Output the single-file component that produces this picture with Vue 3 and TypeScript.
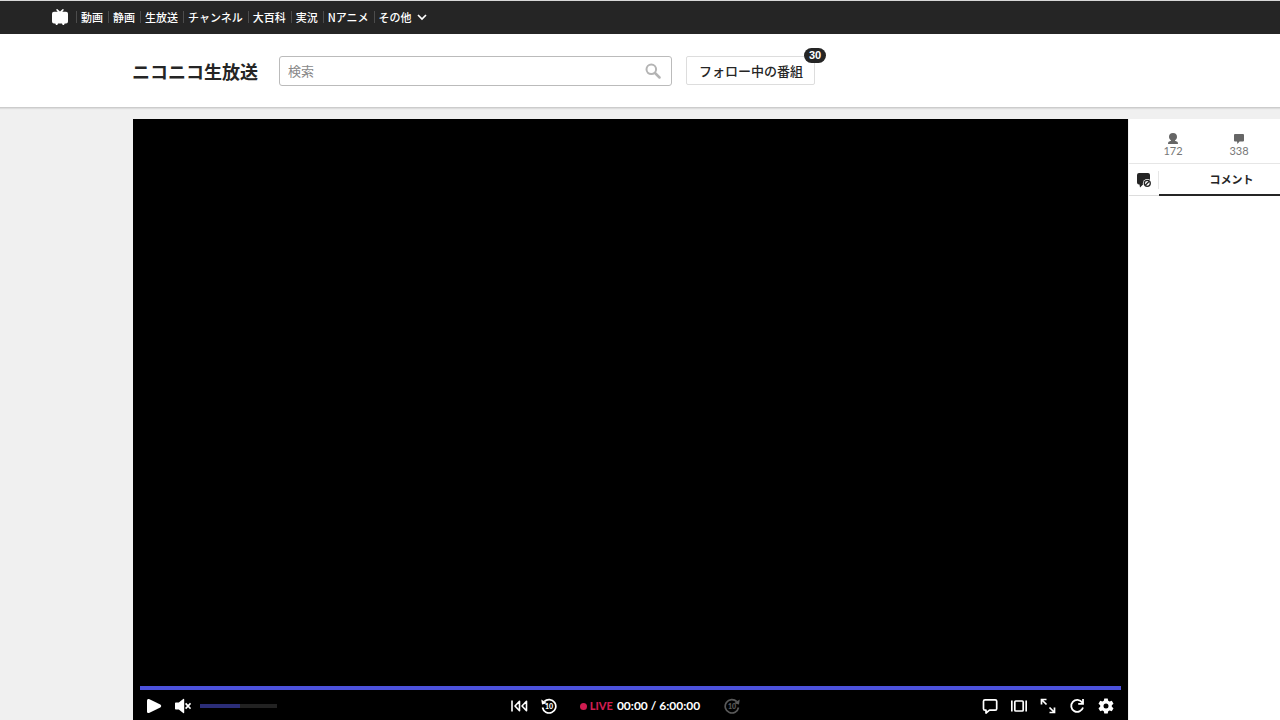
<script setup lang="ts">
import { ref } from 'vue'

const services: string[] = ['動画', '静画', '生放送', 'チャンネル', '大百科', '実況', 'Nアニメ']
const keyword = ref('')
const position = ref(100)
const volume = ref(52)
</script>

<template>
  <div class="page">
    <nav class="services" aria-label="サービス">
      <a class="home" href="#" aria-label="niconico">
        <svg width="16" height="16" viewBox="0 0 16 16" fill="#fff">
          <path d="M4 .7 5.2 0 8 2.4 10.8 0 12 .7 10.3 2.8H14q2 0 2 2v7.6q0 2-2 2h-1.3L12 16h-1.3l-.7-1.600H6L5.300 16H4l-.7-1.600H2q-2 0-2-2V4.800q0-2 2-2h3.700z" />
        </svg>
      </a>
      <a v-for="s in services" :key="s" class="service" href="#">{{ s }}</a>
      <button class="service more" type="button">
        その他
        <svg width="10" height="7" viewBox="0 0 10 7" fill="none" stroke="#fff" stroke-width="1.700"><path d="m1 1 4 4 4-4" /></svg>
      </button>
    </nav>

    <header class="header">
      <a class="logo" href="#">ニコニコ生放送</a>
      <form class="search" role="search" @submit.prevent>
        <input v-model="keyword" type="text" placeholder="検索" aria-label="検索" />
        <button type="submit" aria-label="検索する">
          <svg width="16" height="16" viewBox="0 0 16 16" fill="none" stroke="#b4b4b4">
            <circle cx="6.300" cy="6.300" r="4.800" stroke-width="2" />
            <path d="m10 10 4.500 4.500" stroke-width="2.500" stroke-linecap="round" />
          </svg>
        </button>
      </form>
      <button class="follow" type="button">フォロー中の番組<span class="badge">30</span></button>
    </header>

    <main class="main">
      <section class="player" aria-label="プレイヤー">
        <div class="screen"></div>
        <input v-model.number="position" class="range seek" type="range" aria-label="再生位置" :style="{ '--value': position + '%' }" />
        <div class="controls">
          <div class="group left">
            <button type="button" aria-label="再生">
              <svg width="16" height="16" viewBox="0 0 16 16" fill="#fff"><path d="M1 2.500q0-2 2-1.400l11.300 5.500q1.800 1.400 0 2.800L3 14.900q-2 .6-2-1.400z" /></svg>
            </button>
            <button type="button" aria-label="ミュート解除">
              <svg width="16" height="16" viewBox="0 0 16 16">
                <path fill="#fff" d="M0 5.300q0-.8.8-.8h3L8.200 1q1-.6 1 .5v13q0 1.100-1 .5L3.800 11.500h-3q-.8 0-.8-.8z" />
                <path d="m10.600 5.300 5 5.400m0-5.400-5 5.400" stroke="#fff" stroke-width="1.700" />
              </svg>
            </button>
            <input v-model.number="volume" class="range volume" type="range" aria-label="音量" :style="{ '--value': volume + '%' }" />
          </div>

          <div class="group center">
            <button type="button" aria-label="先頭へ戻る">
              <svg width="17" height="16" viewBox="0 0 17 16" fill="none" stroke="#fff" stroke-width="1.600" stroke-linejoin="round">
                <path d="M1 2.500v11M8.500 3.300v9.400L4 8zM15.500 3.300v9.400L11 8z" />
              </svg>
            </button>
            <button type="button" aria-label="10秒戻る">
              <svg class="skip" width="16" height="16" viewBox="0 0 16 16" fill="none" stroke="#fff" stroke-width="1.700">
                <path d="M3.200 3.700A6.700 6.700 0 1 1 1.500 9.500" />
                <path d="M.3 1.500 1 6.500l5-1.200z" fill="#fff" stroke="none" />
                <text x="8" y="10.500">10</text>
              </svg>
            </button>
            <div class="status">
              <button class="live" type="button"><i></i>LIVE</button>
              <span class="time">00:00 / 6:00:00</span>
            </div>
            <button type="button" aria-label="10秒進む" disabled>
              <svg class="skip" width="16" height="16" viewBox="0 0 16 16" fill="none" stroke="#fff" stroke-width="1.700">
                <path d="M12.800 3.700A6.700 6.700 0 1 0 14.500 9.500" />
                <path d="M15.700 1.500 15 6.500l-5-1.200z" fill="#fff" stroke="none" />
                <text x="8" y="10.500">10</text>
              </svg>
            </button>
          </div>

          <div class="group right">
            <button type="button" aria-label="コメント表示">
              <svg width="16" height="16" viewBox="0 0 16 16" fill="none" stroke="#fff" stroke-width="1.700" stroke-linejoin="round">
                <path d="M3 1.800h10.200q1.500 0 1.500 1.500v7.400q0 1.500-1.500 1.500H7.500L4 15v-2.800H3q-1.500 0-1.500-1.500V3.300q0-1.500 1.500-1.500z" />
              </svg>
            </button>
            <button type="button" aria-label="シアターモード">
              <svg width="16" height="16" viewBox="0 0 16 16" fill="none" stroke="#fff" stroke-width="1.700">
                <rect x="3.800" y="3" width="8.400" height="10" rx="1" /><path d="M.8 2.500v11M15.200 2.500v11" />
              </svg>
            </button>
            <button type="button" aria-label="フルスクリーン">
              <svg width="16" height="16" viewBox="0 0 16 16" fill="none" stroke="#fff" stroke-width="1.700">
                <path d="M1.500 6.500v-5h5M1.500 1.500 6.500 6.500M14.500 9.500v5h-5M14.500 14.500 9.500 9.500" />
              </svg>
            </button>
            <button type="button" aria-label="再読み込み">
              <svg width="16" height="16" viewBox="0 0 16 16" fill="none" stroke="#fff" stroke-width="1.800">
                <path d="M13.200 4.500A6 6 0 1 0 14 9.500M14 1v4.800H9.200" />
              </svg>
            </button>
            <button type="button" aria-label="設定">
              <svg width="16" height="16" viewBox="0 0 16 16">
                <path fill="#fff" fill-rule="evenodd" d="M6.300.5h3.400l.5 2.300 1.400.8 2.200-.8 1.700 3-1.700 1.500v1.500l1.700 1.500-1.700 3-2.200-.8-1.400.8-.5 2.300H6.300l-.5-2.300-1.400-.8-2.200.8-1.700-3 1.700-1.500V7.300L.5 5.800l1.700-3 2.200.8 1.400-.8zM8 5.500a2.500 2.500 0 1 0 0 5 2.500 2.500 0 0 0 0-5z" />
              </svg>
            </button>
          </div>
        </div>
      </section>

      <aside class="side">
        <div class="stats">
          <div class="stat">
            <svg width="10" height="11" viewBox="0 0 10 11" fill="#666"><path d="M5 0c2.600 0 4 1.600 4 3.900C9 5.500 8 6.500 7 7.200v.6l2.300.9q.7.400.7 2.300H0q0-1.900.7-2.300L3 7.800v-.6C2 6.500 1 5.500 1 3.900 1 1.600 2.400 0 5 0z" /></svg>
            <span>172</span>
          </div>
          <div class="stat">
            <svg width="10" height="11" viewBox="0 0 10 11" fill="#666"><path d="M1 1h8q1 0 1 1v5.500q0 1-1 1H5.500L3.500 11 3 8.500H1q-1 0-1-1V2q0-1 1-1z" /></svg>
            <span>338</span>
          </div>
        </div>
        <div class="tabs">
          <button class="filter" type="button" aria-label="コメント設定">
            <svg width="16" height="16" viewBox="0 0 16 16">
              <path fill="#252525" d="M3 1h9q2 0 2 2v7.500q0 2-2 2H7L4 15.500 3.500 12.500H3q-2 0-2-2V3q0-2 2-2z" />
              <circle cx="11.300" cy="11.300" r="4.400" fill="#fff" />
              <circle cx="11.300" cy="11.300" r="3" fill="none" stroke="#252525" stroke-width="1.300" />
              <path d="m9.300 13.300 4-4" stroke="#252525" stroke-width="1.300" />
            </svg>
          </button>
          <button class="tab" type="button">コメント</button>
        </div>
      </aside>
    </main>
  </div>
</template>

<style>
body {
  margin: 0;
}
</style>

<style scoped>
.page {
  display: flex;
  flex-direction: column;
  min-height: 100vh;
  box-sizing: border-box;
  border-top: 1px solid #d8d8d8;
  background: #f0f0f0;
  color: #252525;
  font-family: "Noto Sans CJK JP", sans-serif;
}
button {
  padding: 0;
  border: 0;
  background: none;
  color: inherit;
  font: inherit;
  cursor: pointer;
}
svg {
  display: block;
}
a {
  color: inherit;
  text-decoration: none;
}
.services {
  display: flex;
  align-items: center;
  box-sizing: border-box;
  height: 33px;
  padding: 0 0 1px 52px;
  background: #252525;
  color: #fff;
  font-size: 11px;
  font-weight: 500;
  line-height: 12px;
  white-space: nowrap;
}
.home {
  margin-right: 8px;
}
.service {
  padding: 0 5px 0 4px;
  border-left: 1px solid #4c4c4c;
}
.more {
  display: flex;
  align-items: center;
  gap: 5px;
}
.header {
  display: flex;
  align-items: center;
  height: 73px;
  padding-left: 132px;
  border-bottom: 1px solid #ccc;
  box-shadow: 0 1px 1px #ddd;
  background: #fff;
}
.logo {
  margin-right: 21px;
  font-size: 18px;
  font-weight: 700;
  line-height: 24px;
  white-space: nowrap;
}
.search {
  display: flex;
  align-items: center;
  box-sizing: border-box;
  width: 393px;
  height: 30px;
  margin-right: 14px;
  padding: 0 10px 0 8px;
  border: 1px solid #bbb;
  border-radius: 3px;
}
.search input {
  flex: 1;
  min-width: 0;
  padding: 0;
  border: 0;
  outline: 0;
  background: none;
  color: #252525;
  font: 13px/20px "Noto Sans CJK JP", sans-serif;
}
.search input::placeholder {
  color: #888;
}
.follow {
  position: relative;
  box-sizing: border-box;
  height: 29px;
  padding: 0 11px 0 12px;
  border: 1px solid #ddd;
  border-radius: 2px;
  font-size: 13px;
  font-weight: 500;
  white-space: nowrap;
}
.badge {
  position: absolute;
  top: -9px;
  right: -12px;
  width: 22px;
  border-radius: 8px;
  background: #252525;
  color: #fff;
  font: 700 11px/15px "Liberation Sans", sans-serif;
  text-align: center;
}
.main {
  display: flex;
  flex: 1;
  padding: 11px 0 0 133px;
}
.player {
  display: flex;
  flex: 1;
  flex-direction: column;
  min-width: 0;
  background: #000;
  color: #fff;
}
.screen {
  flex: 1;
}
.range {
  appearance: none;
  height: 4px;
  margin: 0;
  background: linear-gradient(to right, var(--fill) var(--value), #222 var(--value));
  cursor: pointer;
}
.range::-webkit-slider-thumb {
  appearance: none;
  width: 0;
  height: 0;
}
.seek {
  --fill: #4c52dc;
  margin: 0 7px;
}
.volume {
  --fill: #2b2d78;
  width: 77px;
  margin-left: -4px;
}
.controls {
  display: grid;
  grid-template-columns: 1fr auto 1fr;
  align-items: center;
  height: 30px;
  padding: 2px 14px 0 13px;
  box-sizing: border-box;
}
.group {
  display: flex;
  align-items: center;
  gap: 13px;
}
.center {
  padding-right: 9px;
}
.right {
  justify-content: flex-end;
}
.status {
  display: flex;
  align-items: center;
  gap: 4px;
  margin: 0 11px 0 10px;
  font: 700 12px/16px Lato, sans-serif;
  white-space: nowrap;
}
.live {
  display: flex;
  align-items: center;
  gap: 3px;
  color: #cf1c50;
  font-size: 11px;
  font-weight: 900;
}
.live i {
  width: 7px;
  height: 7px;
  border-radius: 50%;
  background: #cf1c50;
}
.skip text {
  fill: #fff;
  stroke: none;
  font: 900 7px Lato, sans-serif;
  text-anchor: middle;
}
button:disabled {
  opacity: 0.35;
  cursor: default;
}
.side {
  width: 151px;
  margin-left: 1px;
  overflow: hidden;
  background: #fff;
}
.stats {
  display: flex;
  box-sizing: border-box;
  height: 45px;
  padding: 14px 0 0 11px;
  border-bottom: 1px solid #e6e6e6;
  color: #777;
}
.stat {
  display: flex;
  flex-direction: column;
  align-items: center;
  width: 66px;
  font: 11px/14px Lato, sans-serif;
}
.tabs {
  display: flex;
  align-items: center;
  height: 32px;
}
.filter {
  display: flex;
  align-items: center;
  justify-content: center;
  width: 30px;
  height: 32px;
  border-bottom: 1px solid #ddd;
  background: linear-gradient(#e6e6e6, #e6e6e6) right center / 1px 18px no-repeat;
}
.tab {
  flex: 1;
  height: 32px;
  padding-left: 24px;
  border-bottom: 2px solid #252525;
  font-size: 11px;
  font-weight: 700;
}
</style>
